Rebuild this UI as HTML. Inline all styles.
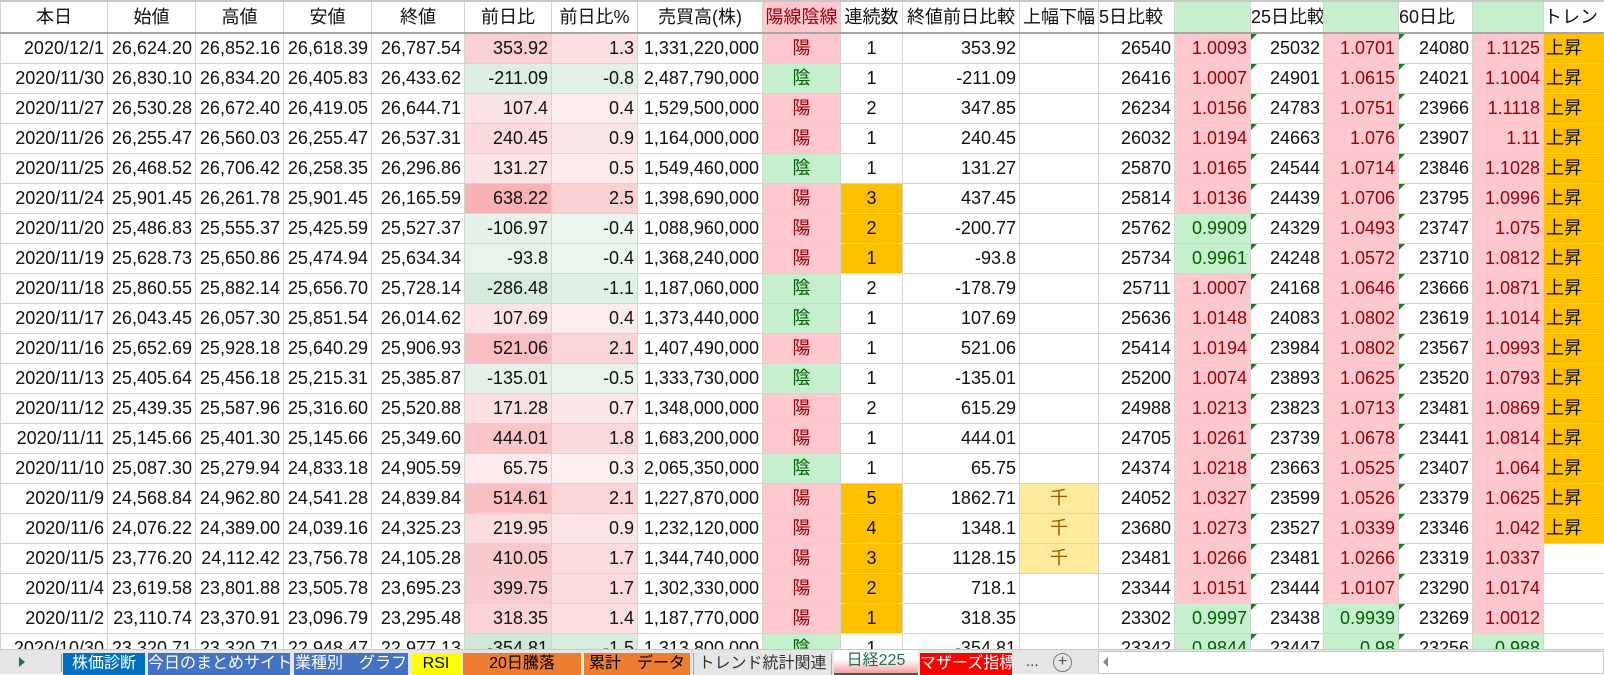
<!DOCTYPE html>
<html><head><meta charset="utf-8">
<style>
*{margin:0;padding:0;box-sizing:border-box}
body{width:1604px;height:674px;overflow:hidden;background:#fff;font-family:"Liberation Sans","Noto Sans CJK JP",sans-serif;font-size:18px;color:#111;position:relative}
table{border-collapse:collapse;table-layout:fixed;position:absolute;left:0;top:0;width:1604px}
td{height:30px;border:1px solid #d4d4d4;text-align:right;padding:0 3px 0 0;white-space:nowrap;overflow:hidden;position:relative;line-height:28px}
tr.h td{height:32px;text-align:center;padding:0;border-bottom:2px solid #a6a6a6;border-top:2px solid #c8c8c8;font-size:18px}
td.c{text-align:center;padding:0}
td.l{text-align:left;padding-left:2px}
.p{background:#ffc7ce;color:#9c0006}
.g{background:#c6efce;color:#006100}
.o{background:#ffc000}
.y{background:#ffeb9c;color:#9c5700}
td.t::before{content:"";position:absolute;left:0;top:0;border-top:6px solid #1a7f1a;border-right:6px solid transparent}
.tabs{position:absolute;left:0;top:649px;width:1604px;height:25px;background:#e6e6e6;border-top:1px solid #c8c8c8}
.tab{position:absolute;top:3px;height:22px;color:#fff;font-size:16px;text-align:center;line-height:22px;white-space:nowrap;overflow:hidden}
</style></head><body>
<table>
<colgroup><col style="width:107px"><col style="width:88px"><col style="width:88px"><col style="width:88px"><col style="width:93px"><col style="width:87px"><col style="width:86px"><col style="width:125px"><col style="width:78px"><col style="width:62px"><col style="width:117px"><col style="width:79px"><col style="width:76px"><col style="width:76px"><col style="width:73px"><col style="width:75px"><col style="width:74px"><col style="width:71px"><col style="width:61px"></colgroup>
<tr class="h"><td>本日</td><td>始値</td><td>高値</td><td>安値</td><td>終値</td><td>前日比</td><td>前日比%</td><td>売買高(株)</td><td class="p">陽線陰線</td><td>連続数</td><td>終値前日比較</td><td>上幅下幅</td><td style="text-align:left">5日比較</td><td class="g"></td><td style="text-align:left">25日比較</td><td class="g"></td><td style="text-align:left">60日比</td><td class="g"></td><td style="text-align:left">トレン</td></tr>
<tr><td>2020/12/1</td><td>26,624.20</td><td>26,852.16</td><td>26,618.39</td><td>26,787.54</td><td style="background:#fad0d3">353.92</td><td style="background:#fbe0e2">1.3</td><td>1,331,220,000</td><td class="c p">陽</td><td class="c">1</td><td>353.92</td><td></td><td>26540</td><td class="p">1.0093</td><td class="t">25032</td><td class="p">1.0701</td><td class="t">24080</td><td class="p">1.1125</td><td class="l o">上昇</td></tr>
<tr><td>2020/11/30</td><td>26,830.10</td><td>26,834.20</td><td>26,405.83</td><td>26,433.62</td><td style="background:#dcefe2">-211.09</td><td style="background:#e3f1e8">-0.8</td><td>2,487,790,000</td><td class="c g">陰</td><td class="c">1</td><td>-211.09</td><td></td><td>26416</td><td class="p">1.0007</td><td class="t">24901</td><td class="p">1.0615</td><td class="t">24021</td><td class="p">1.1004</td><td class="l o">上昇</td></tr>
<tr><td>2020/11/27</td><td>26,530.28</td><td>26,672.40</td><td>26,419.05</td><td>26,644.71</td><td style="background:#fce4e6">107.4</td><td style="background:#fdeced">0.4</td><td>1,529,500,000</td><td class="c p">陽</td><td class="c">2</td><td>347.85</td><td></td><td>26234</td><td class="p">1.0156</td><td class="t">24783</td><td class="p">1.0751</td><td class="t">23966</td><td class="p">1.1118</td><td class="l o">上昇</td></tr>
<tr><td>2020/11/26</td><td>26,255.47</td><td>26,560.03</td><td>26,255.47</td><td>26,537.31</td><td style="background:#fbdadd">240.45</td><td style="background:#fce5e7">0.9</td><td>1,164,000,000</td><td class="c p">陽</td><td class="c">1</td><td>240.45</td><td></td><td>26032</td><td class="p">1.0194</td><td class="t">24663</td><td class="p">1.076</td><td class="t">23907</td><td class="p">1.11</td><td class="l o">上昇</td></tr>
<tr><td>2020/11/25</td><td>26,468.52</td><td>26,706.42</td><td>26,258.35</td><td>26,296.86</td><td style="background:#fce3e5">131.27</td><td style="background:#fdebec">0.5</td><td>1,549,460,000</td><td class="c g">陰</td><td class="c">1</td><td>131.27</td><td></td><td>25870</td><td class="p">1.0165</td><td class="t">24544</td><td class="p">1.0714</td><td class="t">23846</td><td class="p">1.1028</td><td class="l o">上昇</td></tr>
<tr><td>2020/11/24</td><td>25,901.45</td><td>26,261.78</td><td>25,901.45</td><td>26,165.59</td><td style="background:#f8b2b6">638.22</td><td style="background:#fad0d3">2.5</td><td>1,398,690,000</td><td class="c p">陽</td><td class="c o">3</td><td>437.45</td><td></td><td>25814</td><td class="p">1.0136</td><td class="t">24439</td><td class="p">1.0706</td><td class="t">23795</td><td class="p">1.0996</td><td class="l o">上昇</td></tr>
<tr><td>2020/11/20</td><td>25,486.83</td><td>25,555.37</td><td>25,425.59</td><td>25,527.37</td><td style="background:#e6f3ea">-106.97</td><td style="background:#eaf5ee">-0.4</td><td>1,088,960,000</td><td class="c p">陽</td><td class="c o">2</td><td>-200.77</td><td></td><td>25762</td><td class="g">0.9909</td><td class="t">24329</td><td class="p">1.0493</td><td class="t">23747</td><td class="p">1.075</td><td class="l o">上昇</td></tr>
<tr><td>2020/11/19</td><td>25,628.73</td><td>25,650.86</td><td>25,474.94</td><td>25,634.34</td><td style="background:#e7f4eb">-93.8</td><td style="background:#eaf5ee">-0.4</td><td>1,368,240,000</td><td class="c p">陽</td><td class="c o">1</td><td>-93.8</td><td></td><td>25734</td><td class="g">0.9961</td><td class="t">24248</td><td class="p">1.0572</td><td class="t">23710</td><td class="p">1.0812</td><td class="l o">上昇</td></tr>
<tr><td>2020/11/18</td><td>25,860.55</td><td>25,882.14</td><td>25,656.70</td><td>25,728.14</td><td style="background:#d5ebdc">-286.48</td><td style="background:#dff0e4">-1.1</td><td>1,187,060,000</td><td class="c g">陰</td><td class="c">2</td><td>-178.79</td><td></td><td>25711</td><td class="p">1.0007</td><td class="t">24168</td><td class="p">1.0646</td><td class="t">23666</td><td class="p">1.0871</td><td class="l o">上昇</td></tr>
<tr><td>2020/11/17</td><td>26,043.45</td><td>26,057.30</td><td>25,851.54</td><td>26,014.62</td><td style="background:#fce4e6">107.69</td><td style="background:#fdeced">0.4</td><td>1,373,440,000</td><td class="c g">陰</td><td class="c">1</td><td>107.69</td><td></td><td>25636</td><td class="p">1.0148</td><td class="t">24083</td><td class="p">1.0802</td><td class="t">23619</td><td class="p">1.1014</td><td class="l o">上昇</td></tr>
<tr><td>2020/11/16</td><td>25,652.69</td><td>25,928.18</td><td>25,640.29</td><td>25,906.93</td><td style="background:#f9bec2">521.06</td><td style="background:#fad6d9">2.1</td><td>1,407,490,000</td><td class="c p">陽</td><td class="c">1</td><td>521.06</td><td></td><td>25414</td><td class="p">1.0194</td><td class="t">23984</td><td class="p">1.0802</td><td class="t">23567</td><td class="p">1.0993</td><td class="l o">上昇</td></tr>
<tr><td>2020/11/13</td><td>25,405.64</td><td>25,456.18</td><td>25,215.31</td><td>25,385.87</td><td style="background:#e3f1e8">-135.01</td><td style="background:#e8f4ec">-0.5</td><td>1,333,730,000</td><td class="c g">陰</td><td class="c">1</td><td>-135.01</td><td></td><td>25200</td><td class="p">1.0074</td><td class="t">23893</td><td class="p">1.0625</td><td class="t">23520</td><td class="p">1.0793</td><td class="l o">上昇</td></tr>
<tr><td>2020/11/12</td><td>25,439.35</td><td>25,587.96</td><td>25,316.60</td><td>25,520.88</td><td style="background:#fcdfe1">171.28</td><td style="background:#fce8ea">0.7</td><td>1,348,000,000</td><td class="c p">陽</td><td class="c">2</td><td>615.29</td><td></td><td>24988</td><td class="p">1.0213</td><td class="t">23823</td><td class="p">1.0713</td><td class="t">23481</td><td class="p">1.0869</td><td class="l o">上昇</td></tr>
<tr><td>2020/11/11</td><td>25,145.66</td><td>25,401.30</td><td>25,145.66</td><td>25,349.60</td><td style="background:#f9c6ca">444.01</td><td style="background:#fbdadd">1.8</td><td>1,683,200,000</td><td class="c p">陽</td><td class="c">1</td><td>444.01</td><td></td><td>24705</td><td class="p">1.0261</td><td class="t">23739</td><td class="p">1.0678</td><td class="t">23441</td><td class="p">1.0814</td><td class="l o">上昇</td></tr>
<tr><td>2020/11/10</td><td>25,087.30</td><td>25,279.94</td><td>24,833.18</td><td>24,905.59</td><td style="background:#fdeaec">65.75</td><td style="background:#fdeeef">0.3</td><td>2,065,350,000</td><td class="c g">陰</td><td class="c">1</td><td>65.75</td><td></td><td>24374</td><td class="p">1.0218</td><td class="t">23663</td><td class="p">1.0525</td><td class="t">23407</td><td class="p">1.064</td><td class="l o">上昇</td></tr>
<tr><td>2020/11/9</td><td>24,568.84</td><td>24,962.80</td><td>24,541.28</td><td>24,839.84</td><td style="background:#f9bfc3">514.61</td><td style="background:#fad6d9">2.1</td><td>1,227,870,000</td><td class="c p">陽</td><td class="c o">5</td><td>1862.71</td><td class="c y">千</td><td>24052</td><td class="p">1.0327</td><td class="t">23599</td><td class="p">1.0526</td><td class="t">23379</td><td class="p">1.0625</td><td class="l o">上昇</td></tr>
<tr><td>2020/11/6</td><td>24,076.22</td><td>24,389.00</td><td>24,039.16</td><td>24,325.23</td><td style="background:#fbdcde">219.95</td><td style="background:#fce5e7">0.9</td><td>1,232,120,000</td><td class="c p">陽</td><td class="c o">4</td><td>1348.1</td><td class="c y">千</td><td>23680</td><td class="p">1.0273</td><td class="t">23527</td><td class="p">1.0339</td><td class="t">23346</td><td class="p">1.042</td><td class="l o">上昇</td></tr>
<tr><td>2020/11/5</td><td>23,776.20</td><td>24,112.42</td><td>23,756.78</td><td>24,105.28</td><td style="background:#fac9cc">410.05</td><td style="background:#fbdbde">1.7</td><td>1,344,740,000</td><td class="c p">陽</td><td class="c o">3</td><td>1128.15</td><td class="c y">千</td><td>23481</td><td class="p">1.0266</td><td class="t">23481</td><td class="p">1.0266</td><td class="t">23319</td><td class="p">1.0337</td><td></td></tr>
<tr><td>2020/11/4</td><td>23,619.58</td><td>23,801.88</td><td>23,505.78</td><td>23,695.23</td><td style="background:#faccd0">399.75</td><td style="background:#fbdbde">1.7</td><td>1,302,330,000</td><td class="c p">陽</td><td class="c o">2</td><td>718.1</td><td></td><td>23344</td><td class="p">1.0151</td><td class="t">23444</td><td class="p">1.0107</td><td class="t">23290</td><td class="p">1.0174</td><td></td></tr>
<tr><td>2020/11/2</td><td>23,110.74</td><td>23,370.91</td><td>23,096.79</td><td>23,295.48</td><td style="background:#fad3d6">318.35</td><td style="background:#fbdfe1">1.4</td><td>1,187,770,000</td><td class="c p">陽</td><td class="c o">1</td><td>318.35</td><td></td><td>23302</td><td class="g">0.9997</td><td class="t">23438</td><td class="g">0.9939</td><td class="t">23269</td><td class="p">1.0012</td><td></td></tr>
<tr><td>2020/10/30</td><td>23,320.71</td><td>23,320.71</td><td>22,948.47</td><td>22,977.13</td><td style="background:#cfe8d8">-354.81</td><td style="background:#d9eddf">-1.5</td><td>1,313,800,000</td><td class="c g">陰</td><td class="c">1</td><td>-354.81</td><td></td><td>23342</td><td class="g">0.9844</td><td class="t">23447</td><td class="g">0.98</td><td class="t">23256</td><td class="g">0.988</td><td></td></tr>
</table>
<div class="tabs">
<div style="position:absolute;left:19px;top:7px;border-left:6px solid #217346;border-top:5px solid transparent;border-bottom:5px solid transparent"></div>
<div style="position:absolute;left:61px;top:4px;width:1px;height:18px;background:#999"></div>
<div class="tab" style="left:63px;width:82px;background:#0070c0">株価診断</div>
<div class="tab" style="left:148px;width:142px;background:#4472c4">今日のまとめサイト</div>
<div class="tab" style="left:294px;width:114px;background:#4472c4">業種別　グラフ</div>
<div class="tab" style="left:411px;width:50px;background:#ffff00;color:#000">RSI</div>
<div class="tab" style="left:463px;width:118px;background:#ed7d31;color:#000">20日騰落</div>
<div class="tab" style="left:584px;width:106px;background:#ed7d31;color:#000">累計　データ</div>
<div class="tab" style="left:693px;width:139px;background:#e6e6e6;color:#333;border-left:1px solid #aaa;border-right:1px solid #aaa">トレンド統計関連</div>
<div class="tab" style="left:834px;width:84px;top:0;height:25px;background:linear-gradient(#fff 40%,#f4a0a4);color:#217346;border-bottom:2px solid #217346">日経225</div>
<div class="tab" style="left:920px;width:92px;background:#ff0000">マザーズ指標</div>
<div style="position:absolute;left:1026px;top:3px;font-size:15px;color:#333">...</div>
<div style="position:absolute;left:1053px;top:3px;width:19px;height:19px;border:1px solid #777;border-radius:50%;text-align:center;line-height:16px;font-size:16px;color:#555">+</div>
<div style="position:absolute;left:1098px;top:1px;width:506px;height:23px;background:#fff;border:1px solid #c8c8c8"></div>
<div style="position:absolute;left:1103px;top:7px;border-right:5px solid #888;border-top:5px solid transparent;border-bottom:5px solid transparent"></div>
</div>
</body></html>
